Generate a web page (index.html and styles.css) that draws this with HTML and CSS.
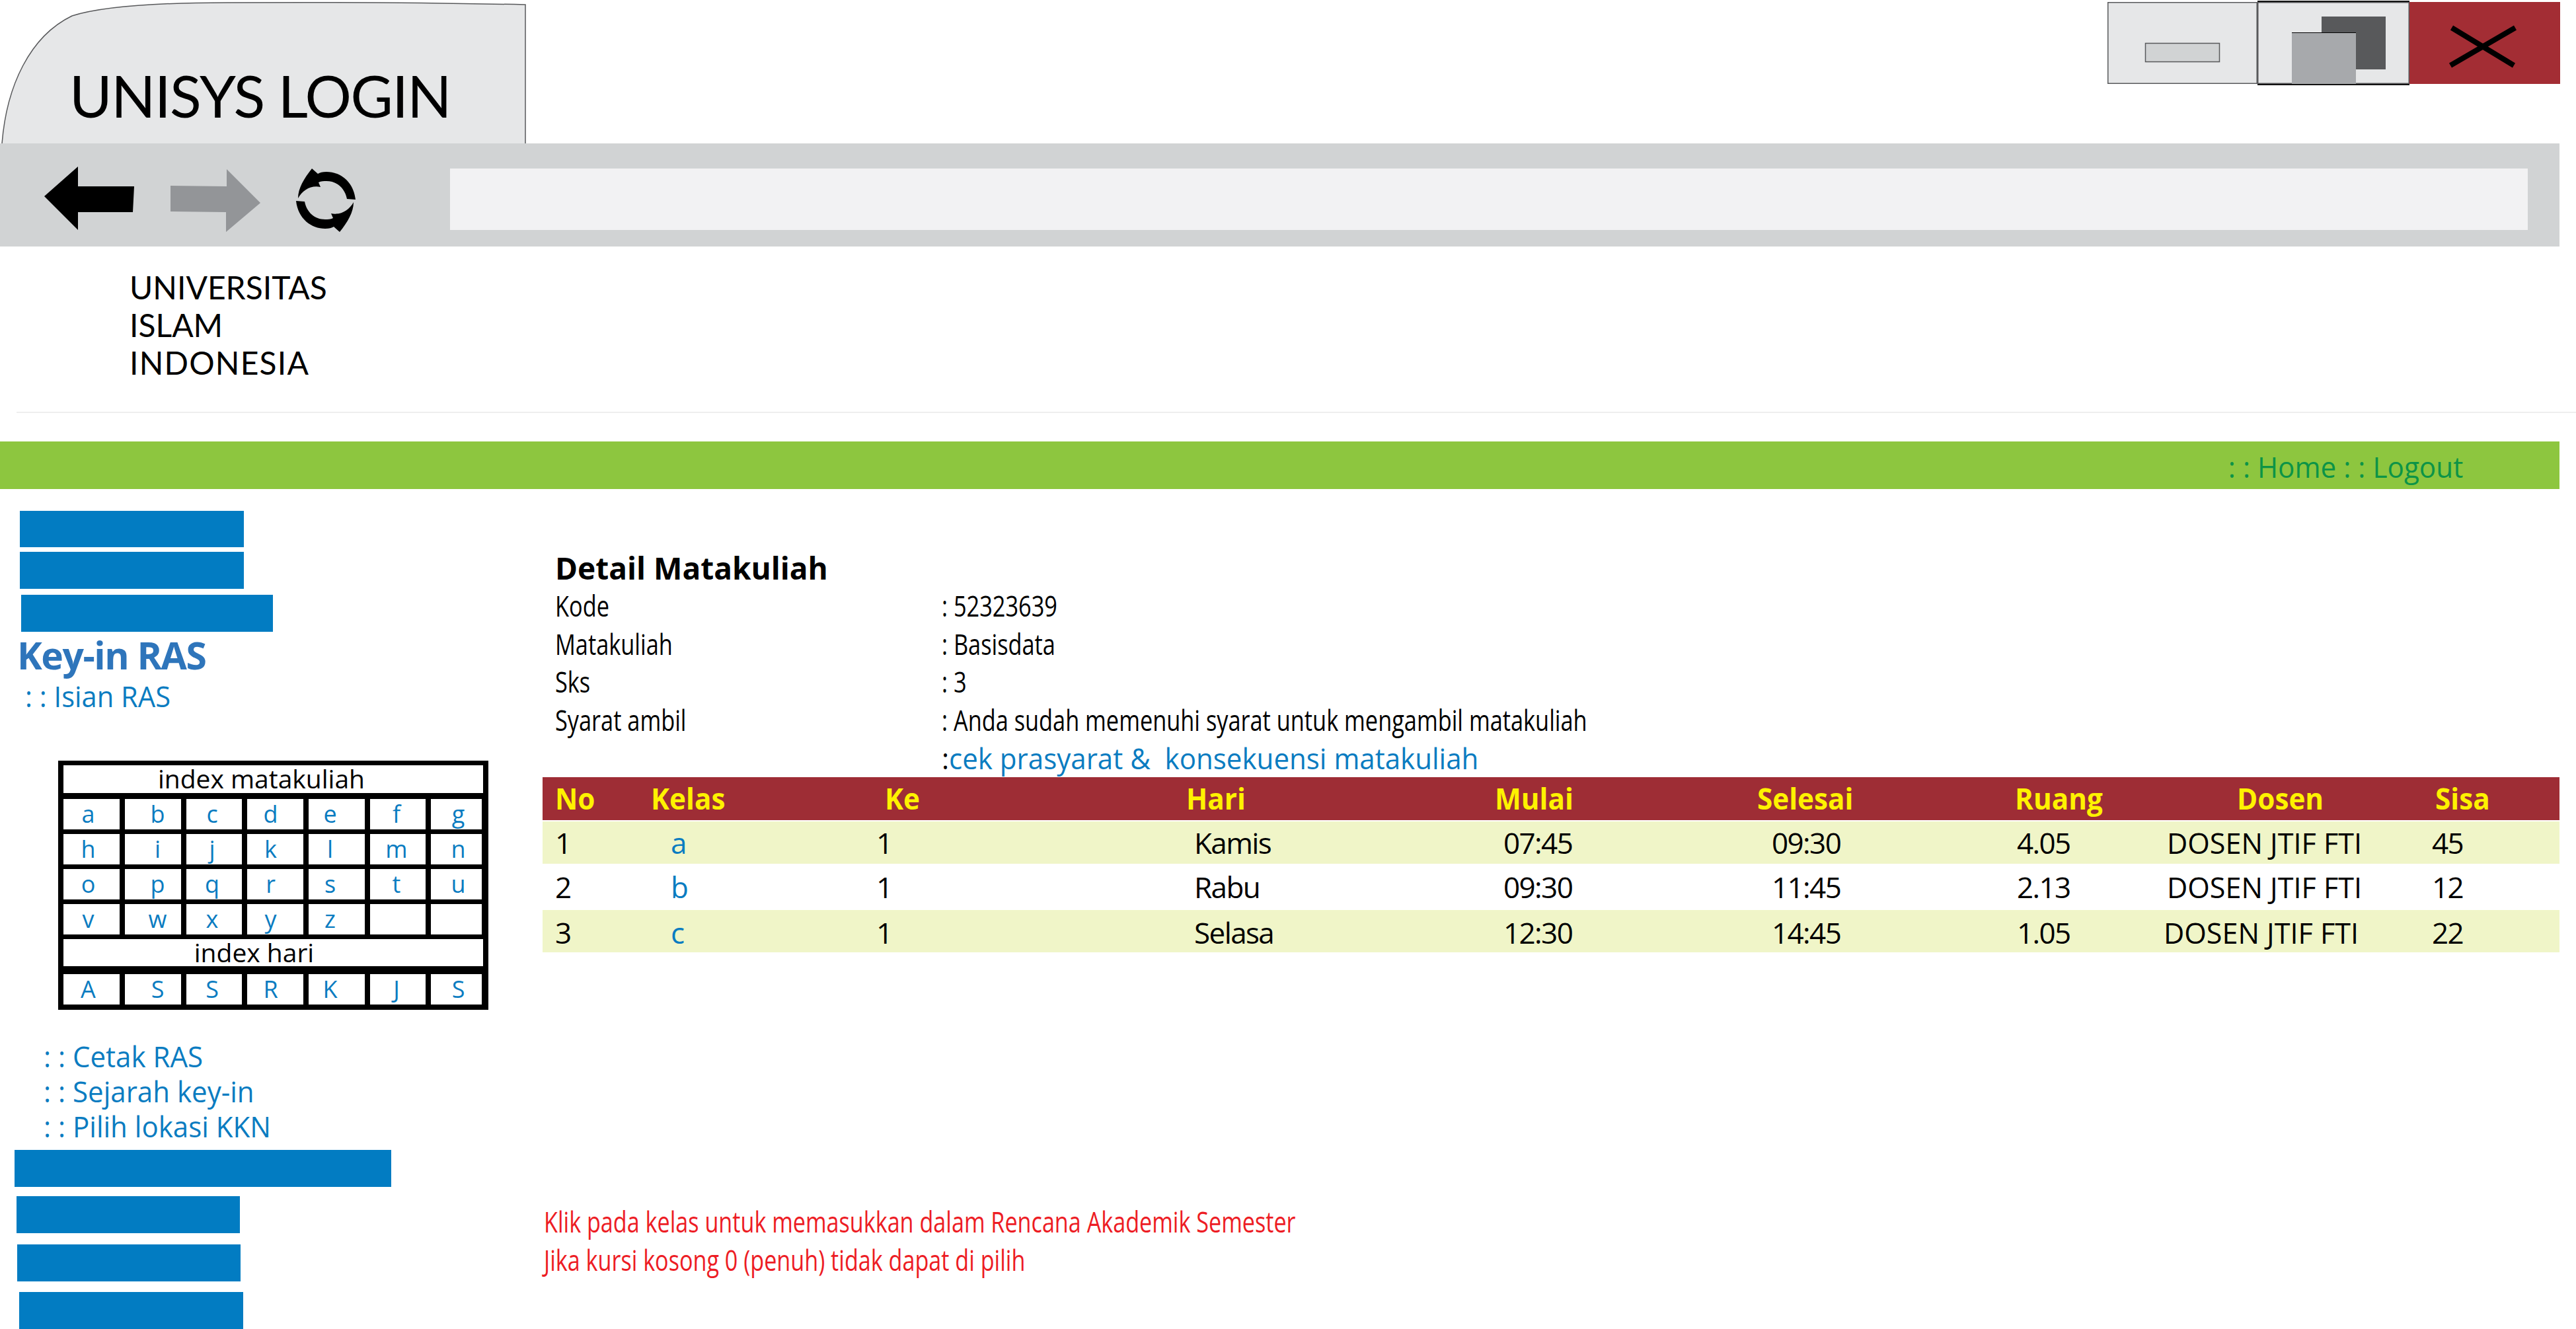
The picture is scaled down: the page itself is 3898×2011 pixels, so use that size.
FILE: index.html
```html
<!DOCTYPE html>
<html>
<head>
    <title>UNISYS LOGIN</title>
    <link rel="stylesheet" href="styles.css">
</head>
<body>

    <div class="titlebar">
        <div class="tab">
            <svg class="tab-shape" width="800" height="217" viewBox="0 0 800 217">
                <path d="M3 217 C 10 130, 45 55, 109 24 C 160 8, 260 4, 344 4 C 500 3, 650 4, 795 7 L 795 217" fill="#e6e7e8" stroke="#58595b" stroke-width="1.5"/>
            </svg>
            <span class="tab-title">UNISYS LOGIN</span>
        </div>
        <div class="win-buttons">
            <div class="win-btn">
                <svg width="227" height="124" viewBox="0 0 227 124">
                    <rect x="57.5" y="62.5" width="112" height="28" fill="#d1d3d4" stroke="#58595b" stroke-width="1.5"/>
                </svg>
            </div>
            <div class="win-btn win-btn-active">
                <svg width="230" height="124" viewBox="0 0 230 124">
                    <rect x="97" y="22" width="97" height="80" fill="#58595b"/>
                    <rect x="52" y="46" width="97" height="78" fill="#a7a9ac"/>
                    <path d="M52 46.5 H149" stroke="#000" stroke-width="1"/>
                </svg>
            </div>
            <div class="win-btn win-btn-close">
                <svg width="228" height="124" viewBox="0 0 228 124">
                    <path d="M64 39 L158 96 M160 39 L62 96" stroke="#000" stroke-width="8" fill="none"/>
                </svg>
            </div>
        </div>
    </div>

    <div class="toolbar">
        <svg class="nav-icons" width="640" height="156" viewBox="0 217 640 156">
            <path d="M67 297 L118 252 L118 282 L203 282 L201 321 L118 321 L118 348 Z" fill="#000"/>
            <path d="M258 281 L343 282 L343 256 L394 307 L342 351 L342 321 L258 320 Z" fill="#939598"/>
            <g id="reload" fill="#000">
                <path d="M538 302 C 535 275, 515 260, 494 260 C 488 260, 484 261, 481 263 L 472 255 C 460 270, 451 285, 451 300 C 458 288, 470 280, 485 283 L 482 276 C 486 274, 490 274, 494 274 C 510 274, 522 285, 525 301 Z"/>
                <path transform="rotate(180 493 303)" d="M538 302 C 535 275, 515 260, 494 260 C 488 260, 484 261, 481 263 L 472 255 C 460 270, 451 285, 451 300 C 458 288, 470 280, 485 283 L 482 276 C 486 274, 490 274, 494 274 C 510 274, 522 285, 525 301 Z"/>
            </g>
        </svg>
        <div class="address"></div>
    </div>

    <div class="brand">UNIVERSITAS<br>ISLAM<br><span class="brand-wide">INDONESIA</span></div>
    <div class="divider"></div>

    <div class="greenbar"><span class="cond cond-right">: : Home : : Logout</span></div>

    <div class="main">
        <div class="sidebar">
            <div class="bar bar-a"></div>
            <div class="bar bar-b"></div>
            <div class="bar bar-c"></div>
            <div class="side-title">Key-in RAS</div>
            <div class="side-sub"><span class="cond cond-sub">: : Isian RAS</span></div>

            <div class="index">
                <div class="index-head index-head-a">index matakuliah</div>
                <div class="index-row"><span>a</span><span>b</span><span>c</span><span>d</span><span>e</span><span>f</span><span>g</span></div>
                <div class="index-row"><span>h</span><span>i</span><span>j</span><span>k</span><span>l</span><span>m</span><span>n</span></div>
                <div class="index-row"><span>o</span><span>p</span><span>q</span><span>r</span><span>s</span><span>t</span><span>u</span></div>
                <div class="index-row"><span>v</span><span>w</span><span>x</span><span>y</span><span>z</span><span></span><span></span></div>
                <div class="index-head index-head-b">index hari</div>
                <div class="index-row index-row-days"><span>A</span><span>S</span><span>S</span><span>R</span><span>K</span><span>J</span><span>S</span></div>
            </div>

            <div class="side-links">
                <div><span class="cond">: : Cetak RAS</span></div>
                <div><span class="cond">: : Sejarah key-in</span></div>
                <div><span class="cond">: : Pilih lokasi KKN</span></div>
            </div>

            <div class="bar bar-d"></div>
            <div class="bar bar-e"></div>
            <div class="bar bar-f"></div>
            <div class="bar bar-g"></div>
        </div>

        <div class="content">
            <div class="detail">
                <div class="detail-title">Detail Matakuliah</div>
                <div class="detail-row"><span class="detail-key"><span class="cond cond-detail">Kode</span></span><span class="cond cond-detail">: 52323639</span></div>
                <div class="detail-row"><span class="detail-key"><span class="cond cond-detail">Matakuliah</span></span><span class="cond cond-detail">: Basisdata</span></div>
                <div class="detail-row"><span class="detail-key"><span class="cond cond-detail">Sks</span></span><span class="cond cond-detail">: 3</span></div>
                <div class="detail-row"><span class="detail-key"><span class="cond cond-detail">Syarat ambil</span></span><span class="cond cond-detail">: Anda sudah memenuhi syarat untuk mengambil matakuliah</span></div>
                <div class="detail-row"><span class="detail-key"></span><span class="cond cond-link">:<a>cek prasyarat &amp;&nbsp; konsekuensi matakuliah</a></span></div>
            </div>

            <table class="kelas">
                <colgroup>
                    <col class="c1"><col class="c2"><col class="c3"><col class="c4"><col class="c5"><col class="c6"><col class="c7"><col class="c8"><col class="c9">
                </colgroup>
                <thead>
                    <tr>
                        <th><span class="cond cond-th">No</span></th>
                        <th><span class="cond cond-th">Kelas</span></th>
                        <th><span class="cond cond-th">Ke</span></th>
                        <th><span class="cond cond-th">Hari</span></th>
                        <th><span class="cond cond-th">Mulai</span></th>
                        <th><span class="cond cond-th">Selesai</span></th>
                        <th><span class="cond cond-th">Ruang</span></th>
                        <th><span class="cond cond-th">Dosen</span></th>
                        <th><span class="cond cond-th">Sisa</span></th>
                    </tr>
                </thead>
                <tbody>
                    <tr class="odd">
                        <td>1</td><td class="link">a</td><td>1</td><td>Kamis</td><td>07:45</td><td>09:30</td><td>4.05</td>
                        <td><span class="cond cond-dosen">DOSEN JTIF FTI</span></td><td>45</td>
                    </tr>
                    <tr class="even">
                        <td>2</td><td class="link">b</td><td>1</td><td>Rabu</td><td>09:30</td><td>11:45</td><td>2.13</td>
                        <td><span class="cond cond-dosen">DOSEN JTIF FTI</span></td><td>12</td>
                    </tr>
                    <tr class="odd last">
                        <td>3</td><td class="link">c</td><td>1</td><td>Selasa</td><td>12:30</td><td>14:45</td><td>1.05</td>
                        <td><span class="cond cond-dosen">DOSEN JTIF FTI</span></td><td>22</td>
                    </tr>
                </tbody>
            </table>

            <div class="notes">
                <div><span class="cond cond-note">Klik pada kelas untuk memasukkan dalam Rencana Akademik Semester</span></div>
                <div><span class="cond cond-note">Jika kursi kosong 0 (penuh) tidak dapat di pilih</span></div>
            </div>
        </div>
    </div>

</body>
</html>
```

FILE: styles.css
```css
html, body {
    margin: 0;
    padding: 0;
    background-color: #ffffff;
}

body {
    width: 3898px;
    height: 2011px;
    overflow: hidden;
    font-family: "Open Sans", Arial, sans-serif;
    font-size: 44px;
    color: #000000;
}

/* squeezed text, the original uses a condensed face */
.cond {
    display: inline-block;
    white-space: nowrap;
    transform: scaleX(0.956);
    transform-origin: left center;
}

.cond-right {
    transform: scaleX(0.96);
    transform-origin: right center;
}

.cond-sub { transform: scaleX(0.947); }
.cond-detail { transform: scaleX(0.78); }
.cond-link { transform: scaleX(0.956); color: #000000; }
.cond-th { transform: scaleX(0.96); }
.cond-dosen { transform: scaleX(0.98); letter-spacing: 0; }
.cond-note { transform: scaleX(0.776); }

/* window top */
.titlebar {
    display: flex;
    justify-content: space-between;
    width: 3874px;
    height: 217px;
}

.tab {
    position: relative;
    width: 800px;
    height: 217px;
}

.tab-shape {
    position: absolute;
    left: 0;
    top: 0;
}

.tab-title {
    position: relative;
    display: block;
    padding: 94px 0 0 105px;
    font-family: Lato, sans-serif;
    font-size: 88px;
    letter-spacing: -1.5px;
    line-height: 100px;
    white-space: nowrap;
}

.win-buttons {
    display: flex;
    margin-top: 3px;
    height: 124px;
}

.win-btn {
    width: 227px;
    height: 124px;
    background-color: #e6e7e8;
    box-shadow: inset 0 0 0 1.5px #58595b;
}

.win-btn svg {
    display: block;
}

.win-btn-active {
    width: 230px;
    border-top: 2px solid #111111;
    border-bottom: 2px solid #111111;
    margin-top: -2px;
}

.win-btn-close {
    width: 228px;
    background-color: #a32d34;
    box-shadow: none;
}

/* toolbar */
.toolbar {
    display: flex;
    width: 3873px;
    height: 156px;
    background-color: #d1d3d4;
}

.nav-icons {
    display: block;
    flex: none;
}

.address {
    width: 3144px;
    height: 93px;
    margin: 38px 0 0 41px;
    background-color: #f2f2f3;
}

/* university name */
.brand {
    padding: 33px 0 0 196px;
    font-family: Lato, sans-serif;
    font-size: 48px;
    line-height: 57px;
}

.brand-wide {
    letter-spacing: 1.2px;
}

.divider {
    height: 2px;
    margin: 46px 0 0 25px;
    background-color: #eeeeee;
}

.greenbar {
    width: 3873px;
    height: 68px;
    margin-top: 43px;
    padding-top: 4px;
    background-color: #8dc63f;
    color: #0c9447;
    line-height: 68px;
    text-align: right;
}

.greenbar .cond {
    margin-right: 146px;
}

/* page */
.main {
    display: flex;
    width: 3873px;
}

.sidebar {
    flex: none;
    width: 821px;
}

.bar {
    height: 56px;
    background-color: #027cc2;
}

.bar-a { width: 339px; height: 55px; margin: 33px 0 0 30px; }
.bar-b { width: 339px; margin: 7px 0 0 30px; }
.bar-c { width: 381px; margin: 9px 0 0 32px; }
.bar-d { width: 570px; margin: 9px 0 0 22px; }
.bar-e { width: 338px; margin: 14px 0 0 25px; }
.bar-f { width: 338px; margin: 17px 0 0 26px; }
.bar-g { width: 339px; margin: 16px 0 0 29px; }

.side-title {
    margin: 7px 0 0 26px;
    font-size: 57px;
    font-weight: 700;
    line-height: 56px;
    color: #2e75bb;
    letter-spacing: -1.5px;
}

.side-sub {
    margin: 6px 0 0 38px;
    line-height: 56px;
    color: #0a7cc1;
}

.index {
    display: flex;
    flex-direction: column;
    gap: 9px;
    box-sizing: border-box;
    width: 651px;
    height: 377px;
    margin: 70px 0 0 88px;
    padding: 7px 8px 8px;
    background-color: #000000;
}

.index-head {
    background-color: #ffffff;
    font-size: 39px;
    line-height: 40px;
    text-align: center;
}

.index-head-a {
    height: 42px;
    padding-right: 36px;
}

.index-head-b {
    height: 41px;
    padding-right: 58px;
    margin-bottom: 3px;
}

.index-row {
    display: grid;
    grid-template-columns: 85px 85px 84px 85px 85px 84px 77px;
    column-gap: 8px;
    height: 44px;
}

.index-row span {
    background-color: #ffffff;
    color: #0a7cc1;
    font-size: 36px;
    line-height: 46px;
    text-align: center;
}

.index-row span:nth-child(1) { padding-right: 10px; }
.index-row span:nth-child(2) { padding-left: 14px; }
.index-row span:nth-child(3) { padding-right: 6px; }
.index-row span:nth-child(4) { padding-right: 14px; }
.index-row span:nth-child(5) { padding-right: 20px; }
.index-row span:nth-child(6) { padding-right: 4px; }
.index-row span:nth-child(7) { padding-left: 6px; }

.side-links {
    margin: 44px 0 0 66px;
    line-height: 53px;
    color: #0a7cc1;
}

/* detail */
.content {
    flex: 1;
    min-width: 0;
}

.detail {
    padding: 91px 0 0 19px;
    line-height: 57.7px;
}

.detail-title {
    font-size: 46px;
    font-weight: 700;
    height: 57px;
}

.detail-row {
    display: flex;
    height: 57.7px;
}

.detail-key {
    flex: none;
    width: 585px;
}

.cond-link a {
    color: #0a7cc1;
}

/* table */
.kelas {
    width: 100%;
    table-layout: fixed;
    border-collapse: collapse;
}

.c1 { width: 154px; }
.c2 { width: 345px; }
.c3 { width: 470px; }
.c4 { width: 470px; }
.c5 { width: 395px; }
.c6 { width: 390px; }
.c7 { width: 225px; }
.c8 { width: 405px; }
.c9 { width: 198px; }

.kelas th, .kelas td {
    padding: 0;
    text-align: left;
    font-size: 44px;
    white-space: nowrap;
}

.kelas th {
    height: 65px;
    line-height: 65px;
    background-color: #9e2d35;
    color: #fff200;
    font-weight: 700;
}

.kelas thead {
    border-bottom: 2px solid #ffffff;
}

.kelas td {
    line-height: 56px;
    letter-spacing: -1.6px;
}

.kelas .odd td {
    height: 64px;
    background-color: #f0f5c8;
}

.kelas .even td {
    height: 70px;
}

.kelas td.link {
    color: #0a7cc1;
}

.kelas th:nth-child(1) { padding-left: 19px; }
.kelas th:nth-child(2) { padding-left: 10px; }
.kelas th:nth-child(3) { padding-left: 19px; }
.kelas th:nth-child(4) { padding-left: 5px; }
.kelas th:nth-child(5) { padding-left: 2px; }
.kelas th:nth-child(6) { padding-left: 4px; }
.kelas th:nth-child(7) { padding-left: 4px; }
.kelas th:nth-child(8) { padding-left: 115px; }
.kelas th:nth-child(9) { padding-left: 10px; }

.kelas td:nth-child(1) { padding-left: 19px; }
.kelas td:nth-child(2) { padding-left: 40px; }
.kelas td:nth-child(3) { padding-left: 6px; }
.kelas td:nth-child(4) { padding-left: 17px; }
.kelas td:nth-child(5) { padding-left: 15px; }
.kelas td:nth-child(6) { padding-left: 26px; }
.kelas td:nth-child(7) { padding-left: 7px; }
.kelas td:nth-child(8) { padding-left: 9px; }
.kelas td:nth-child(9) { padding-left: 5px; }

.kelas .last td {
    height: 61px;
    padding-top: 3px;
}

.kelas .last td:nth-child(8) {
    padding-left: 4px;
}

.notes {
    margin: 378px 0 0 2px;
    line-height: 58px;
    color: #ed1c24;
}
```
